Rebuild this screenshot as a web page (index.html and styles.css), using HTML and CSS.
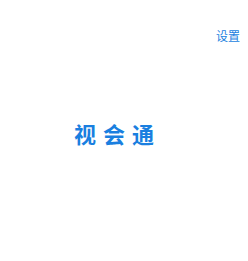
FILE: index.html
```html
<!DOCTYPE html>
<html lang="zh-CN">
<head>
  <meta charset="UTF-8" />
  <meta name="viewport" content="width=device-width, initial-scale=1.0" />
  <title>视会通</title>
  <link rel="stylesheet" href="styles.css">
</head>
<body>
  <div class="topbar">
    <a class="settings" href="#">设置</a>
  </div>
  <div class="brand">
    <h1>视会通</h1>
  </div>
</body>
</html>
```

FILE: styles.css
```css
body {
  margin: 0;
  background-color: #fff;
  font-family: "Noto Sans CJK SC", "Noto Sans", sans-serif;
}

.topbar {
  display: flex;
  justify-content: flex-end;
  padding: 28px 8px 0 0;
}

.settings {
  color: #1a7fe0;
  font-size: 12px;
  line-height: 16px;
  text-decoration: none;
}

.brand {
  padding: 74px 0 0 74px;
}

h1 {
  margin: 0;
  color: #1a7fe0;
  font-size: 22px;
  font-weight: bold;
  line-height: 30px;
  letter-spacing: 7px;
}
```
